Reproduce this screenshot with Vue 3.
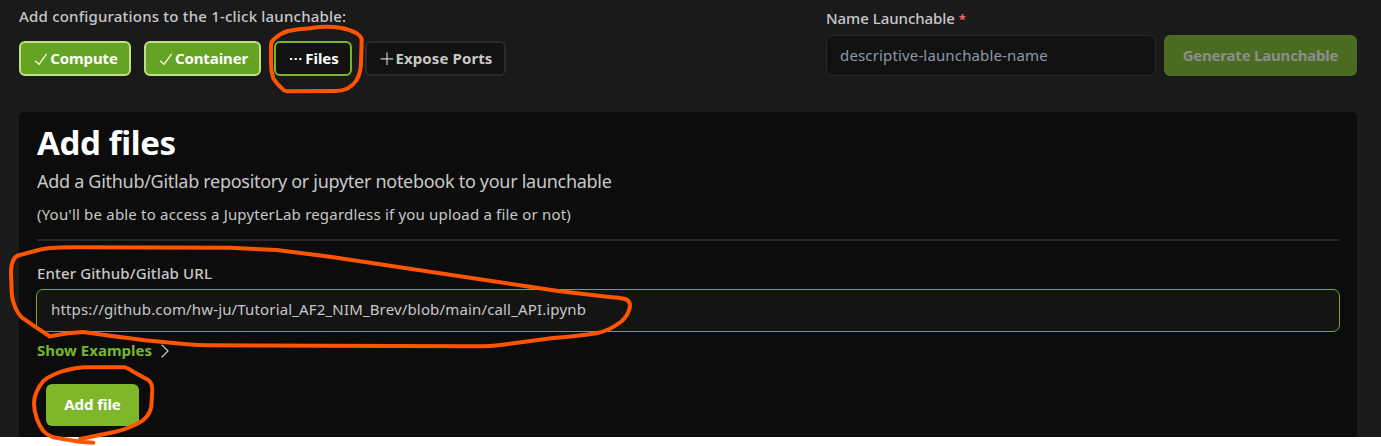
<script setup>
import { ref } from 'vue'

const steps = [
  { label: 'Compute', state: 'done', icon: 'check' },
  { label: 'Container', state: 'done', icon: 'check' },
  { label: 'Files', state: 'active', icon: 'dots' },
  { label: 'Expose Ports', state: 'idle', icon: 'plus' },
]
const name = ref('')
const url = ref('https://github.com/hw-ju/Tutorial_AF2_NIM_Brev/blob/main/call_API.ipynb')
</script>

<template>
  <div class="page">
    <header class="top">
      <div class="config">
        <p class="intro"><span>Add configurations to the 1-click launchable:</span></p>
        <div class="steps">
          <button v-for="s in steps" :key="s.label" class="step" :class="[s.state, s.icon]">
            <svg class="icon" viewBox="0 0 14 14" width="14" height="14">
              <path v-if="s.icon === 'check'" d="M1 8.6 5 12.3 12.6 1.9" />
              <path v-else-if="s.icon === 'plus'" d="M7 .5V13M.7 6.8H13.2" />
              <g v-else class="dot-row">
                <rect x="1" y="6" width="2.2" height="2" /><rect x="5.6" y="6" width="2.2" height="2" /><rect x="10.2" y="6" width="2.2" height="2" />
              </g>
            </svg>
            <span>{{ s.label }}</span>
          </button>
        </div>
      </div>
      <div class="naming">
        <label class="name-label"><span>Name Launchable</span> <b class="star">*</b></label>
        <div class="name-row">
          <input v-model="name" class="name-input" placeholder="descriptive-launchable-name" />
          <button class="generate"><span>Generate Launchable</span></button>
        </div>
      </div>
    </header>

    <main class="panel">
      <h1><span>Add files</span></h1>
      <p class="subtitle"><span>Add a Github/Gitlab repository or jupyter notebook to your launchable</span></p>
      <p class="note"><span>(You'll be able to access a JupyterLab regardless if you upload a file or not)</span></p>
      <div class="rule"></div>
      <label class="url-label"><span>Enter Github/Gitlab URL</span></label>
      <input v-model="url" class="url-input" />
      <div class="examples">
        <span>Show Examples</span>
        <svg viewBox="0 0 8 14" width="8" height="14"><path d="M.7 .8 7 7 .7 13.2" /></svg>
      </div>
      <button class="add"><span>Add file</span></button>
    </main>

    <svg class="marks" viewBox="0 0 1381 446" width="1381" height="446">
      <path d="M288 31Q298 29 310 28.3Q317 26.8 325 26.7Q333 26.5 340 27.7Q349 29 356.7 33.3Q361.5 36.5 361.7 40L361 61.7Q361 72 356.7 80Q353 85.500 348 88.300Q342 91.200 335 91L286.700 91.300Q284 91 281.700 88.300Q277 84 273.300 78.300Q271 72 271 63.300V45Q271 41 275 38.300Q281 33 288 31Z" />
      <path d="M50 336.500L35 326.700 21.700 317.300Q16.500 312 14 304Q11.500 298 11.500 286L11 273.300Q11 266 12.700 261.700Q14 257.500 17.300 255.700L35 251Q42 248.800 48 248.300Q60 247.300 73.300 247.300L230 247.700 276.700 250 330 256.700 533 287.300 560 291.300 605 296.400Q621 297.700 625 299Q631 301 629.700 308Q628 315 622 321Q610 330.500 596.700 333.300Q580 336 553 338L500 345Q490 346.500 470 346.200L206.700 345.300Q190 345 163.300 342L145 340.300 110 335.700 83.300 332Q68 332.500 51.700 336" />
      <path d="M93.300 442.700 80 441.700Q65 439.500 53.300 437.300Q47 435 43.300 431Q39 425 36.700 418.300Q34 410 34 403.300Q34 398 36 393.300Q39 386 43.300 381Q48 377 55 374Q67 369 83.300 367.300H125Q129 368.500 133.300 371.700L148.300 380Q152.300 383 152.300 390L151.300 406.700Q150 413 146.700 416.700Q143 421 138.300 423.300Q125 430 113.300 432.300L80 439" />
    </svg>
  </div>
</template>

<style>
body { margin: 0; background: #fff; }
</style>

<style scoped>
* { box-sizing: border-box; }
.page { position: relative; height: 446px; overflow: hidden; font-family: "Noto Sans", Roboto, sans-serif; font-size: 15px; color: #c8c8c8; background: linear-gradient(#1a1a1a 437px, #fff 437px); }
button, input { font: inherit; margin: 0; }
p, h1 { margin: 0; }
button, span, label { white-space: nowrap; }
.top { display: flex; justify-content: space-between; height: 112px; padding: 7px 24px 0 19px; }
.intro { height: 34px; line-height: 18px; font-weight: 500; letter-spacing: .2px; }
.steps { display: flex; gap: 13px; }
.step { display: flex; align-items: center; justify-content: center; height: 35px; border: 2px solid #2a2a2a; border-radius: 6px; padding: 0 0 0 2px; background: #121212; color: #c8c8c8; font-weight: 700; gap: 2px; letter-spacing: -.1px; }
.step span { padding-bottom: 2px; }
.step:nth-child(1) { width: 112px; }
.step:nth-child(2) { width: 117px; }
.step:nth-child(3) { width: 78px; letter-spacing: 0; }
.step:nth-child(4) { width: 141px; padding-left: 1px; letter-spacing: .1px; }
.step.done { background: #64a422; border-color: #bfdf88; color: #fff; }
.step.active { border-color: #76b72a; color: #fff; }
.icon { fill: none; stroke: currentColor; stroke-width: 1.2; flex: none; }
.dot-row { fill: currentColor; stroke: none; }
.naming { width: 531px; }
.name-label { display: block; height: 28px; line-height: 22px; font-weight: 500; letter-spacing: -.05px; }
.star { color: #ef6262; font-size: 13px; }
.name-row { display: flex; justify-content: space-between; }
.name-input { width: 330px; height: 41px; background: #121212; border: 1px solid #292929; border-radius: 6px; padding: 0 13px 2px; color: #c8c8c8; letter-spacing: .15px; }
.name-input::placeholder { color: #8b99a8; opacity: 1; }
.generate { width: 193px; height: 41px; border: 0; border-radius: 6px; padding: 0 0 2px; background: #4a6b20; color: #8d8d8d; font-weight: 700; letter-spacing: -.2px; }
.panel { margin: 0 24px 0 19px; padding: 12px 18px 0; height: 325px; background: #0c0c0c; border-radius: 6px 6px 0 0; display: flex; flex-direction: column; align-items: flex-start; }
h1 { height: 46px; line-height: 38px; font-size: 33px; font-weight: 700; color: #fff; letter-spacing: -.35px; }
.subtitle { height: 34px; line-height: 22px; font-size: 18px; letter-spacing: -.29px; }
.note { height: 35px; line-height: 20px; letter-spacing: .19px; }
.rule { width: 100%; height: 2px; background: #292929; }
.url-label { height: 48px; padding-top: 22px; line-height: 20px; font-weight: 500; letter-spacing: .13px; }
.url-input { width: 1304px; height: 43px; margin-left: -1px; background: #141414; border: 1px solid #76a82a; border-radius: 7px; padding: 0 14px 3px; color: #c8c8c8; outline: none; letter-spacing: .155px; }
.examples { display: flex; align-items: center; gap: 9px; height: 38px; margin-bottom: 14px; color: #76b72a; font-weight: 700; }
.examples span { padding-bottom: 2px; }
.examples svg { fill: none; stroke: #ccc; stroke-width: 1.2; }
.add { width: 93px; height: 42px; margin-left: 9px; border: 0; border-radius: 6px; padding: 0 0 2px; background: #7eb72a; color: #fff; font-weight: 700; flex: none; letter-spacing: -.05px; }
.marks { position: absolute; left: 0; top: 0; pointer-events: none; fill: none; stroke: #ff5500; stroke-width: 4; stroke-linejoin: round; stroke-linecap: round; }
</style>
